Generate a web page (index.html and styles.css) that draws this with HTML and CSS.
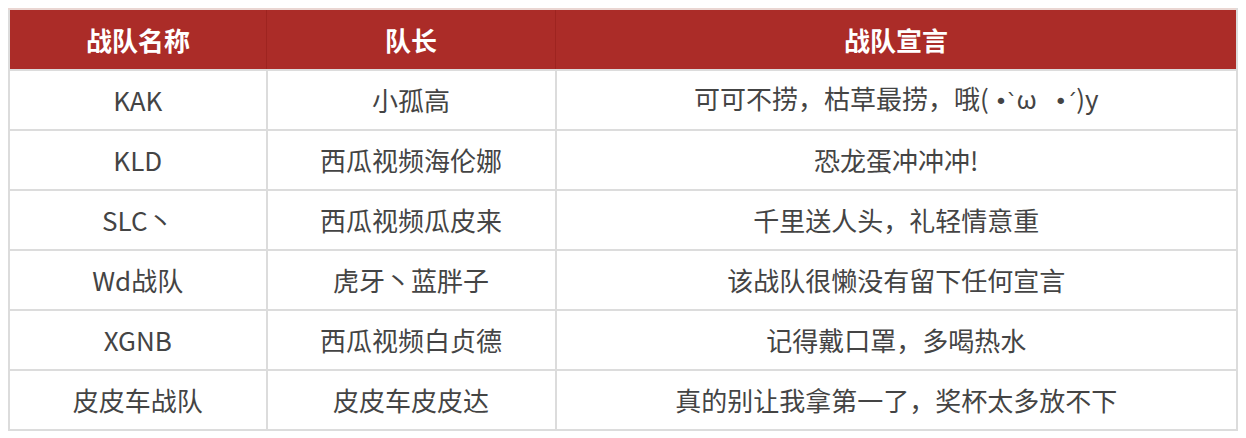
FILE: index.html
```html
<!DOCTYPE html>
<html lang="zh-CN">
<head>
<meta charset="utf-8">
<link rel="stylesheet" href="styles.css">
</head>
<body>
<table class="teams">
  <thead>
    <tr>
      <th class="c1">战队名称</th>
      <th class="c2">队长</th>
      <th class="c3">战队宣言</th>
    </tr>
  </thead>
  <tbody>
    <tr><td>KAK</td><td>小孤高</td><td>可可不捞，枯草最捞，哦( <span class="emo">•`</span>ω&nbsp;&nbsp;&nbsp;<span class="emo">•´</span>)y</td></tr>
    <tr><td>KLD</td><td>西瓜视频海伦娜</td><td>恐龙蛋冲冲冲!</td></tr>
    <tr><td>SLC丶</td><td>西瓜视频瓜皮来</td><td>千里送人头，礼轻情意重</td></tr>
    <tr><td>Wd战队</td><td>虎牙丶蓝胖子</td><td>该战队很懒没有留下任何宣言</td></tr>
    <tr><td>XGNB</td><td>西瓜视频白贞德</td><td>记得戴口罩，多喝热水</td></tr>
    <tr><td>皮皮车战队</td><td>皮皮车皮皮达</td><td>真的别让我拿第一了，奖杯太多放不下</td></tr>
  </tbody>
</table>
</body>
</html>
```

FILE: styles.css
```css
html, body {
  background: #ffffff;
}
body {
  margin: 8px;
  font-family: "Noto Sans CJK SC", "Noto Sans", sans-serif;
}
.teams {
  width: 1230px;
  border-collapse: collapse;
  table-layout: fixed;
  border: 2px solid #dcdcdc;
  border-top: 2px solid #ead6d2;
}
.teams th,
.teams td {
  text-align: center;
  vertical-align: middle;
  padding: 0;
  font-size: 26px;
  line-height: 32px;
}
.teams th {
  height: 59px;
  background: #ab2c28;
  color: #ffffff;
  font-weight: 700;
  border-left: 1px solid #9e2420;
  border-bottom: 1px solid #9a2420;
}
.teams th:first-child {
  border-left: none;
}
.teams .c1 { width: 256px; }
.teams .c2 { width: 288px; }
.teams td {
  height: 58px;
  color: #444444;
  border: 2px solid #dcdcdc;
}
.emo {
  font-family: "DejaVu Sans", sans-serif;
  font-size: 22px;
  letter-spacing: -1px;
}
```
